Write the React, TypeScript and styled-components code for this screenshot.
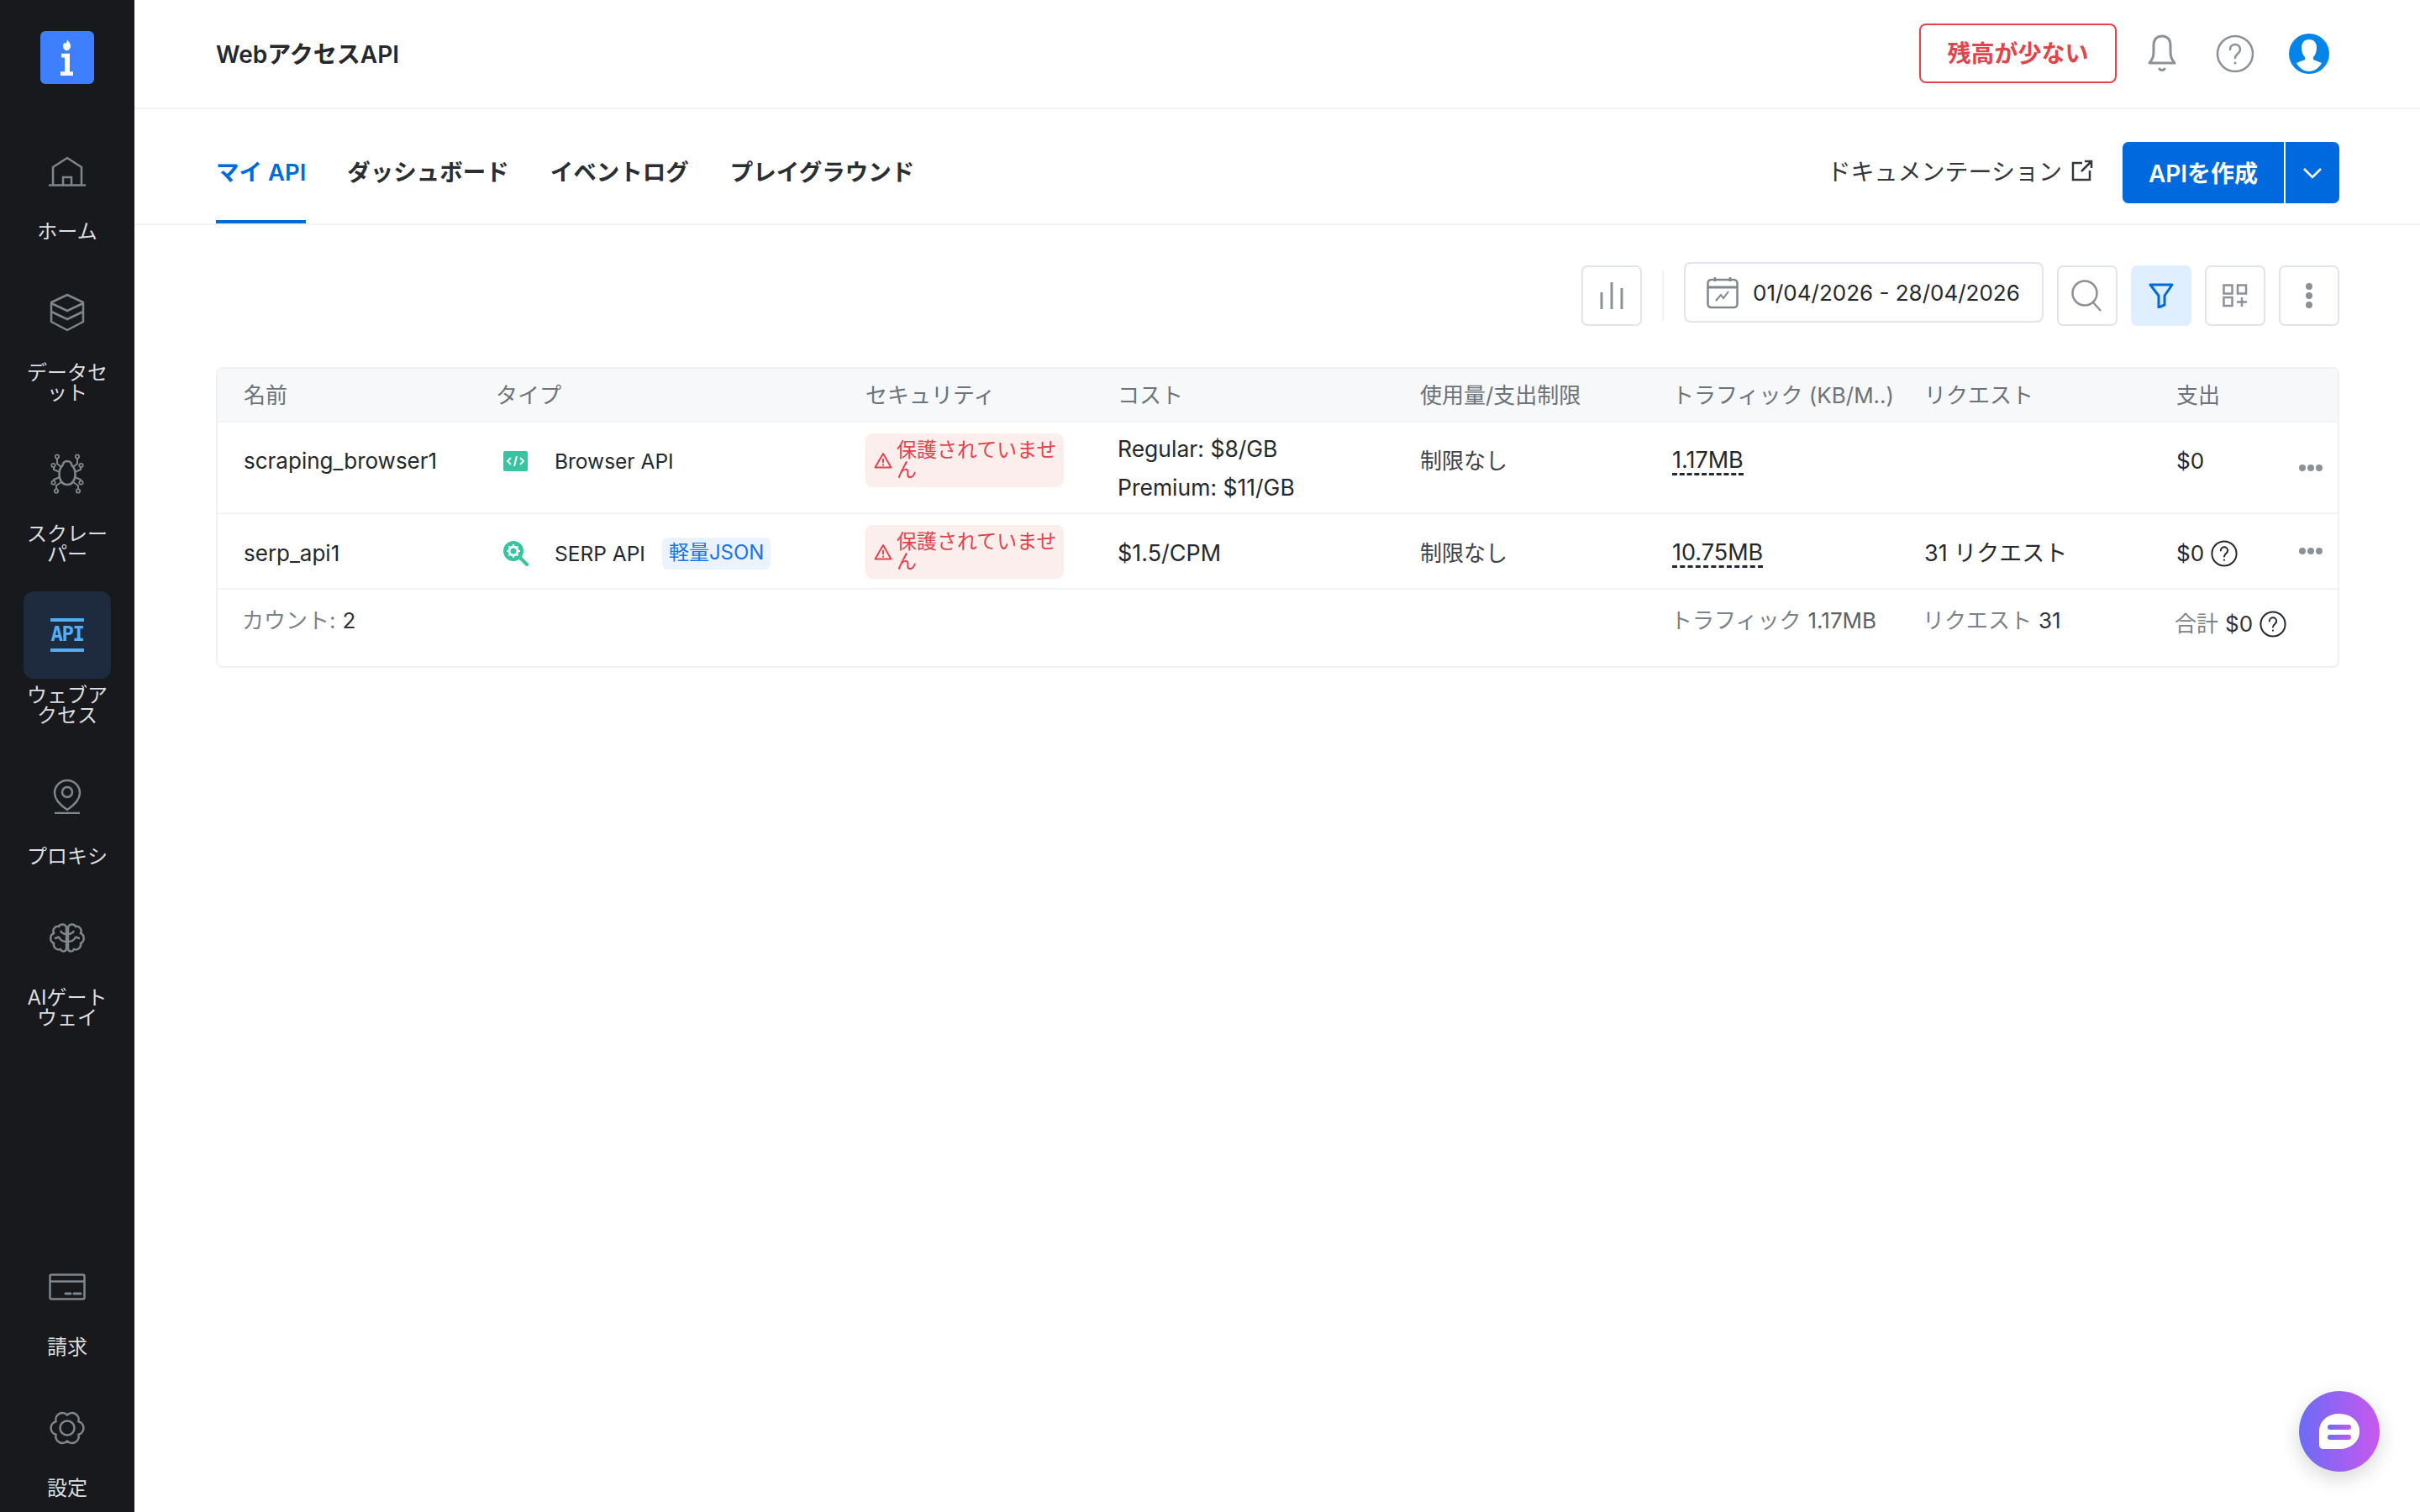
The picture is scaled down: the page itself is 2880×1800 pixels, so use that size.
import styled, { createGlobalStyle } from 'styled-components'
import type { ReactNode } from 'react'

const GlobalStyle = createGlobalStyle`
  html, body {
    margin: 0;
    padding: 0;
    background: #fff;
  }
  * {
    box-sizing: border-box;
  }
  body {
    font-family: Inter, "Noto Sans CJK JP", sans-serif;
    color: #25282c;
  }
`

const COLUMNS = '300px 440px 300px 360px 300px 300px 300px 140px 1fr'

const Shell = styled.div`
  display: flex;
  width: 2880px;
  height: 1800px;
  overflow: hidden;
  position: relative;
`

const Sidebar = styled.nav`
  width: 160px;
  flex-shrink: 0;
  background: #17191c;
  display: flex;
  flex-direction: column;
  align-items: center;
  padding: 37px 0 16px;
`

const Logo = styled.div`
  width: 64px;
  height: 63px;
  border-radius: 6px;
  background: #3d7fff;
  display: flex;
  align-items: center;
  justify-content: center;
  margin-bottom: 52px;
`

const NavGroup = styled.div`
  display: flex;
  flex-direction: column;
  align-items: center;
  gap: 32px;
`

const NavSpacer = styled.div`
  flex: 1;
`

const NavItem = styled.div`
  display: flex;
  flex-direction: column;
  align-items: center;
  gap: 8px;
`

const NavIcon = styled.div<{ $active?: boolean }>`
  width: 104px;
  height: 104px;
  border-radius: 12px;
  display: flex;
  align-items: center;
  justify-content: center;
  background: ${p => (p.$active ? '#1e2b3e' : 'transparent')};
`

const NavLabel = styled.div`
  width: 104px;
  text-align: center;
  font-size: 24px;
  line-height: 24px;
  color: #dcdee0;
  line-break: loose;
`

const ApiMark = styled.div`
  width: 40px;
  height: 40px;
  border-top: 4px solid #53aef5;
  border-bottom: 4px solid #53aef5;
  color: #53aef5;
  font-family: "DejaVu Sans Mono", monospace;
  font-size: 24px;
  font-weight: 700;
  line-height: 31px;
  letter-spacing: -1.5px;
  text-align: center;
  white-space: nowrap;
`

const Main = styled.main`
  flex: 1;
  min-width: 0;
  display: flex;
  flex-direction: column;
`

const TopBar = styled.header`
  height: 130px;
  flex-shrink: 0;
  border-bottom: 2px solid #f2f3f4;
  padding: 28px 96px 0 97px;
  display: flex;
  align-items: flex-start;
  justify-content: space-between;
`

const PageTitle = styled.h1`
  margin: 0;
  font-size: 28px;
  line-height: 74px;
  font-weight: 600;
  color: #25282c;
`

const TopActions = styled.div`
  display: flex;
  align-items: center;
  height: 71px;
`

const LowBalance = styled.button`
  width: 235px;
  height: 71px;
  padding: 0 0 3px;
  border: 2px solid #e1444b;
  border-radius: 8px;
  background: #fff;
  color: #e1444b;
  font: 600 28px Inter, "Noto Sans CJK JP", sans-serif;
  margin-right: 36px;
`

const TopIcon = styled.div<{ $gap?: number }>`
  display: flex;
  margin-right: ${p => p.$gap ?? 0}px;
`

const TabBar = styled.div`
  height: 138px;
  flex-shrink: 0;
  border-bottom: 2px solid #f2f3f4;
  padding: 0 96px 0 97px;
  display: flex;
  align-items: stretch;
  justify-content: space-between;
`

const Tabs = styled.div`
  display: flex;
  gap: 49px;
`

const Tab = styled.div<{ $active?: boolean }>`
  display: flex;
  align-items: center;
  height: 136px;
  font-size: 27.5px;
  font-weight: 600;
  padding-top: 14px;
  color: ${p => (p.$active ? '#0069de' : '#2b2e32')};
  border-bottom: 4px solid ${p => (p.$active ? '#0069de' : 'transparent')};
`

const TabActions = styled.div`
  display: flex;
  align-items: center;
  padding-top: 15px;
`

const DocsLink = styled.div`
  display: flex;
  align-items: center;
  gap: 11px;
  font-size: 28px;
  color: #33373b;
  margin-right: 35px;
  padding-bottom: 5px;
`

const CreateButton = styled.div`
  display: flex;
  height: 73px;
  border-radius: 7px;
  overflow: hidden;
  background: #0069de;
  color: #fff;
`

const CreateLabel = styled.div`
  width: 194px;
  display: flex;
  align-items: center;
  justify-content: center;
  padding-bottom: 2px;
  font-size: 28px;
  font-weight: 600;
  border-right: 2px solid #fff;
`

const CreateCaret = styled.div`
  width: 64px;
  display: flex;
  align-items: center;
  justify-content: center;
`

const Content = styled.section`
  padding: 44px 96px 0 97px;
  display: flex;
  flex-direction: column;
`

const Toolbar = styled.div`
  display: flex;
  justify-content: flex-end;
  align-items: flex-start;
  gap: 16px;
  height: 125px;
`

const ToolButton = styled.div<{ $active?: boolean }>`
  width: 72px;
  height: 72px;
  margin-top: 4px;
  border-radius: 7px;
  display: flex;
  align-items: center;
  justify-content: center;
  border: 2px solid ${p => (p.$active ? '#e0efff' : '#e1e4e8')};
  background: ${p => (p.$active ? '#e0efff' : '#fff')};
`

const ToolDivider = styled.div`
  width: 2px;
  height: 60px;
  margin: 10px 8px 0;
  background: #f0f1f3;
`

const DatePicker = styled.div`
  width: 428px;
  height: 72px;
  border: 2px solid #e1e4e8;
  border-radius: 8px;
  display: flex;
  align-items: center;
  gap: 17px;
  padding-left: 25px;
  font-size: 26px;
  color: #25282c;
  white-space: nowrap;
`

const Table = styled.div`
  border: 2px solid #eff1f3;
  border-radius: 8px;
  overflow: hidden;
  height: 358px;
`

const HeadRow = styled.div`
  display: grid;
  grid-template-columns: ${COLUMNS};
  height: 64px;
  padding-bottom: 4px;
  align-items: center;
  background: #f7f8fa;
  border-bottom: 2px solid #f2f3f4;
`

const HeadCell = styled.div`
  padding-left: 31px;
  font-size: 26px;
  color: #6b737b;
  white-space: nowrap;
`

const Row = styled.div<{ $height: number }>`
  display: grid;
  grid-template-columns: ${COLUMNS};
  height: ${p => p.$height}px;
  border-bottom: 2px solid #f2f3f4;
`

const Cell = styled.div<{ $top?: number; $muted?: boolean; $size?: number }>`
  padding: ${p => p.$top ?? 0}px 0 0 31px;
  font-size: ${p => p.$size ?? 26}px;
  line-height: 46px;
  color: ${p => (p.$muted ? '#3f444a' : '#25282c')};
  white-space: nowrap;
`

const TypeCell = styled(Cell)`
  display: flex;
  align-items: flex-start;
  font-size: 24.5px;
`

const TypeIcon = styled.div`
  width: 40px;
  height: 46px;
  margin: 0 21px 0 9px;
  display: flex;
  align-items: center;
`

const Tag = styled.span`
  margin: 4px 0 0 20px;
  height: 38px;
  padding: 0 8px;
  border-radius: 7px;
  background: #eaf3ff;
  color: #1a73e8;
  font-size: 24px;
  line-height: 36px;
`

const BadgeCell = styled.div<{ $top: number }>`
  padding: ${p => p.$top}px 0 0 31px;
`

const Badge = styled.div`
  width: 236px;
  height: 64px;
  border-radius: 8px;
  background: #fdeeee;
  color: #e1444b;
  display: flex;
  align-items: center;
  gap: 5px;
  padding-left: 10px;
  font-size: 24px;
  line-height: 24px;
`

const BadgeText = styled.div`
  width: 194px;
`

const Dashed = styled.span`
  display: inline-block;
  line-height: 31px;
  border-bottom: 3px dashed #25282c;
`

const Spend = styled.span`
  display: inline-flex;
  align-items: center;
  gap: 8px;
`

const Dots = styled.div`
  align-self: center;
  display: flex;
  gap: 2px;
  padding-left: 37px;
`

const Dot = styled.i<{ $size?: number; $color?: string }>`
  display: block;
  width: ${p => p.$size ?? 8}px;
  height: ${p => p.$size ?? 8}px;
  border-radius: 50%;
  background: ${p => p.$color ?? '#8a9198'};
`

const MoreDots = styled.div`
  display: flex;
  flex-direction: column;
  gap: 3px;
`

const FootRow = styled.div`
  display: grid;
  grid-template-columns: ${COLUMNS};
  padding-top: 14px;
`

const FootCell = styled.div<{ $shift?: number; $span?: number }>`
  grid-column: span ${p => p.$span ?? 1};
  margin-top: ${p => p.$shift ?? 0}px;
  padding-left: 29px;
  font-size: 26px;
  line-height: 46px;
  color: #7b828a;
  white-space: nowrap;
  display: flex;
  align-items: center;
  gap: 8px;
  height: 46px;
`

const FootValue = styled.span<{ $muted?: boolean }>`
  color: ${p => (p.$muted ? '#5b6268' : '#30343a')};
`

const ChatBubble = styled.div`
  position: absolute;
  right: 48px;
  bottom: 48px;
  width: 96px;
  height: 96px;
  border-radius: 50%;
  background: linear-gradient(90deg, #6a6cf6, #c958ee);
  box-shadow: 0 8px 24px rgba(0, 0, 0, 0.16);
  display: flex;
  align-items: center;
  justify-content: center;
`

const Line = ({ children, w, h }: { children: ReactNode; w: number; h: number }) => (
  <svg width={w} height={h} viewBox={`0 0 ${w} ${h}`} fill="none" stroke="#7f868c" strokeWidth="2.5">
    {children}
  </svg>
)

const HomeIcon = () => (
  <Line w={44} h={36}>
    <path d="M5 34V13L22 2l17 11v21" strokeLinejoin="round" />
    <path d="M0 34.5h44M17 34v-9h10v9" />
  </Line>
)

const LayersIcon = () => (
  <Line w={44} h={46}>
    <path d="M22 2l19 9v23L22 44 3 34V11z" strokeLinejoin="round" />
    <path d="M3 12l19 9 19-9M3 22l19 9 19-9" />
  </Line>
)

const SpiderLegs = () => (
  <>
    <path d="M13 16L8 12V5M11 22l-7-3v-3M11 28l-7 3v2M13 34l-6 4v4" strokeWidth="2" />
    <circle cx="8" cy="3.500" r="2.200" strokeWidth="1.800" />
    <circle cx="3.500" cy="14" r="2.200" strokeWidth="1.800" />
    <circle cx="3.500" cy="34.500" r="2.200" strokeWidth="1.800" />
    <circle cx="7" cy="44.500" r="2.200" strokeWidth="1.800" />
  </>
)

const SpiderIcon = () => (
  <Line w={40} h={48}>
    <path d="M20 9c3 0 5 2 5.500 5 2.500 2 4 6 4 11 0 7-4 12-9.500 12s-9.500-5-9.500-12c0-5 1.500-9 4-11C15 11 17 9 20 9z" />
    <SpiderLegs />
    <g transform="translate(40 0) scale(-1 1)">
      <SpiderLegs />
    </g>
  </Line>
)

const PinIcon = () => (
  <Line w={34} h={42}>
    <path d="M17 37C8 31 2 25 2 17a15 15 0 1 1 30 0c0 8-6 14-15 20z" />
    <circle cx="17" cy="16" r="6" />
    <path d="M2 41h30" />
  </Line>
)

const BrainHalf = () => (
  <path d="M21 6c-1-4-7-5-9-1-5-1-8 4-6 8-5 2-5 10 0 12-1 5 4 9 8 7 2 4 7 3 7-1zM21 14c-4 0-6-2-7-4M21 23c-4 0-8-2-9-6M7 19c2 0 4-1 5-2" />
)

const BrainIcon = () => (
  <Line w={44} h={37}>
    <BrainHalf />
    <g transform="translate(44 0) scale(-1 1)">
      <BrainHalf />
    </g>
  </Line>
)

const CardIcon = () => (
  <Line w={44} h={32}>
    <rect x="1.500" y="1.500" width="41" height="29" rx="2" />
    <path d="M1.500 9.500h41" />
    <path d="M20 24h6M30 24h8" strokeWidth="3" strokeLinecap="round" />
  </Line>
)

const GearIcon = () => (
  <Line w={44} h={42}>
    <path d="M22 5.500A8 8 0 0 1 35.400 13.250 8 8 0 0 1 35.400 28.750 8 8 0 0 1 22 36.500 8 8 0 0 1 8.600 28.750 8 8 0 0 1 8.600 13.250 8 8 0 0 1 22 5.500z" strokeLinejoin="round" />
    <circle cx="22" cy="21" r="8.500" />
  </Line>
)

const LogoMark = () => (
  <svg width="16" height="43" viewBox="0 0 16 36" preserveAspectRatio="none" fill="#fff">
    <path d="M8 0c1 2 4 3 4 6.500a4.500 4.500 0 0 1-9 0C3 5 4 4 5 3c0 1 1 1.500 1.500 1C7 3 8 2 8 0z" />
    <path d="M1 14h10v18h4v4H0v-4h5V18H1z" />
  </svg>
)

const BellIcon = () => (
  <svg width="36" height="46" viewBox="0 0 36 46" fill="none" stroke="#8a9198" strokeWidth="3">
    <path d="M3 34c3-4 5-6 5-14V13C8 6 12 2 18 2s10 4 10 11v7c0 8 2 10 5 14z" strokeLinejoin="round" />
    <path d="M15 41c1 2 5 2 6 0" strokeLinecap="round" />
  </svg>
)

const HelpIcon = ({ size = 46, color = '#8a9198', width = 2.5 }: { size?: number; color?: string; width?: number }) => (
  <svg width={size} height={size} viewBox="0 0 46 46" fill="none" stroke={color} strokeWidth={(width * 46) / size} style={{ flexShrink: 0 }}>
    <circle cx="23" cy="23" r="21" />
    <path d="M17 18c0-4 3-6 6-6s6 2 6 6c0 5-6 5-6 10" strokeLinecap="round" />
    <circle cx="23" cy="34" r="1.500" fill={color} stroke="none" />
  </svg>
)

const AvatarIcon = () => (
  <svg width="48" height="48" viewBox="0 0 48 48">
    <circle cx="24" cy="24" r="24" fill="#0284e8" />
    <path d="M24 7c6 0 9 4 9 10 0 5-2 9-4 11v3l10 4c-3 6-9 10-15 10S12 41 9 35l10-4v-3c-2-2-4-6-4-11 0-6 3-10 9-10z" fill="#fff" />
  </svg>
)

const ExternalIcon = () => (
  <svg width="26" height="26" viewBox="0 0 26 26" fill="none" stroke="#33373b" strokeWidth="2.500">
    <path d="M13 4H2v20h20V13M12 14L24 2M16 2h8v8" />
  </svg>
)

const CaretIcon = () => (
  <svg width="24" height="14" viewBox="0 0 24 14" fill="none" stroke="#fff" strokeWidth="2.500">
    <path d="M2 2l10 10L22 2" />
  </svg>
)

const BarsIcon = () => (
  <svg width="28" height="32" viewBox="0 0 28 32" fill="none" stroke="#8a9198" strokeWidth="3">
    <path d="M2 12v20M14 0v32M26 7v25" />
  </svg>
)

const CalendarIcon = () => (
  <svg width="38" height="40" viewBox="0 0 38 40" fill="none" stroke="#7f868c" strokeWidth="2.500">
    <rect x="1.500" y="5" width="35" height="33" rx="4" />
    <path d="M1.500 14h35" strokeWidth="3" />
    <path d="M10 2v5M28 2v5" />
    <path d="M11 30l6-7 3 4 6-8" strokeWidth="2" />
  </svg>
)

const SearchIcon = () => (
  <svg width="38" height="38" viewBox="0 0 38 38" fill="none" stroke="#8a9198" strokeWidth="2.500">
    <circle cx="16" cy="16" r="14.500" />
    <path d="M26 27l9 10" />
  </svg>
)

const FilterIcon = () => (
  <svg width="30" height="30" viewBox="0 0 30 30" fill="none" stroke="#0069de" strokeWidth="3">
    <path d="M2 2h26L19 15v11l-7 3V15z" strokeLinejoin="round" />
  </svg>
)

const GridPlusIcon = () => (
  <svg width="30" height="28" viewBox="0 0 30 28" fill="none" stroke="#8a9198" strokeWidth="2.500">
    <rect x="1.500" y="1.500" width="10" height="10" />
    <rect x="18" y="1.500" width="10" height="10" />
    <rect x="1.500" y="16" width="10" height="10" />
    <path d="M23 16v11M17 21.500h12" />
  </svg>
)

const WarnIcon = () => (
  <svg width="22" height="20" viewBox="0 0 22 20" fill="none" stroke="#e1444b" strokeWidth="2" style={{ flexShrink: 0 }}>
    <path d="M11 2L1.500 18.500h19z" strokeLinejoin="round" />
    <path d="M11 8v5M11 14.500v2" />
  </svg>
)

const CodeIcon = () => (
  <svg width="29" height="24" viewBox="0 0 29 24">
    <rect width="29" height="24" rx="2" fill="#36c5a0" />
    <path d="M9 8l-4 4 4 4M20 8l4 4-4 4M16 6l-3 12" fill="none" stroke="#fff" strokeWidth="2" />
  </svg>
)

const SerpIcon = () => (
  <svg width="30" height="30" viewBox="0 0 30 30">
    <circle cx="12" cy="12" r="12" fill="#36c5a0" />
    <circle cx="12" cy="12" r="5" fill="none" stroke="#fff" strokeWidth="3" />
    <path d="M12 4v3M12 17v3M4 12h3M17 12h3M6.500 6.500l2 2M15.500 15.500l2 2M6.500 17.500l2-2M15.500 8.500l2-2" stroke="#fff" strokeWidth="2" />
    <path d="M20 20l8 8" stroke="#36c5a0" strokeWidth="4" strokeLinecap="round" />
  </svg>
)

const ChatIcon = () => (
  <svg width="48" height="42" viewBox="0 0 48 42">
    <defs>
      <linearGradient id="chatLine" x1="0" x2="1" y1="0" y2="0">
        <stop offset="0" stopColor="#6a6cf6" />
        <stop offset="1" stopColor="#c958ee" />
      </linearGradient>
    </defs>
    <path d="M24 0c13 0 24 8 24 21S37 42 24 42H5c-3 0-5-2-5-5V21C0 8 11 0 24 0z" fill="#fff" />
    <rect x="10" y="13" width="28" height="6" rx="3" fill="url(#chatLine)" />
    <rect x="10" y="25" width="28" height="6" rx="3" fill="url(#chatLine)" />
  </svg>
)

const RowDots = () => (
  <Dots>
    <Dot />
    <Dot />
    <Dot />
  </Dots>
)

const SecurityBadge = ({ top }: { top: number }) => (
  <BadgeCell $top={top}>
    <Badge>
      <WarnIcon />
      <BadgeText>保護されていません</BadgeText>
    </Badge>
  </BadgeCell>
)

export default function App() {
  return (
    <Shell>
      <GlobalStyle />
      <Sidebar>
        <Logo>
          <LogoMark />
        </Logo>
        <NavGroup>
          <NavItem>
            <NavIcon>
              <HomeIcon />
            </NavIcon>
            <NavLabel>ホーム</NavLabel>
          </NavItem>
          <NavItem>
            <NavIcon>
              <LayersIcon />
            </NavIcon>
            <NavLabel>データセット</NavLabel>
          </NavItem>
          <NavItem>
            <NavIcon>
              <SpiderIcon />
            </NavIcon>
            <NavLabel>スクレーパー</NavLabel>
          </NavItem>
          <NavItem>
            <NavIcon $active>
              <ApiMark>API</ApiMark>
            </NavIcon>
            <NavLabel>ウェブアクセス</NavLabel>
          </NavItem>
          <NavItem>
            <NavIcon>
              <PinIcon />
            </NavIcon>
            <NavLabel>プロキシ</NavLabel>
          </NavItem>
          <NavItem>
            <NavIcon>
              <BrainIcon />
            </NavIcon>
            <NavLabel>AIゲートウェイ</NavLabel>
          </NavItem>
        </NavGroup>
        <NavSpacer />
        <NavGroup>
          <NavItem>
            <NavIcon>
              <CardIcon />
            </NavIcon>
            <NavLabel>請求</NavLabel>
          </NavItem>
          <NavItem>
            <NavIcon>
              <GearIcon />
            </NavIcon>
            <NavLabel>設定</NavLabel>
          </NavItem>
        </NavGroup>
      </Sidebar>

      <Main>
        <TopBar>
          <PageTitle>WebアクセスAPI</PageTitle>
          <TopActions>
            <LowBalance>残高が少ない</LowBalance>
            <TopIcon $gap={46}>
              <BellIcon />
            </TopIcon>
            <TopIcon $gap={41}>
              <HelpIcon />
            </TopIcon>
            <TopIcon $gap={12}>
              <AvatarIcon />
            </TopIcon>
          </TopActions>
        </TopBar>

        <TabBar>
          <Tabs>
            <Tab $active>マイ API</Tab>
            <Tab>ダッシュボード</Tab>
            <Tab>イベントログ</Tab>
            <Tab>プレイグラウンド</Tab>
          </Tabs>
          <TabActions>
            <DocsLink>
              ドキュメンテーション
              <ExternalIcon />
            </DocsLink>
            <CreateButton>
              <CreateLabel>APIを作成</CreateLabel>
              <CreateCaret>
                <CaretIcon />
              </CreateCaret>
            </CreateButton>
          </TabActions>
        </TabBar>

        <Content>
          <Toolbar>
            <ToolButton>
              <BarsIcon />
            </ToolButton>
            <ToolDivider />
            <DatePicker>
              <CalendarIcon />
              01/04/2026 - 28/04/2026
            </DatePicker>
            <ToolButton>
              <SearchIcon />
            </ToolButton>
            <ToolButton $active>
              <FilterIcon />
            </ToolButton>
            <ToolButton>
              <GridPlusIcon />
            </ToolButton>
            <ToolButton>
              <MoreDots>
                <Dot />
                <Dot />
                <Dot />
              </MoreDots>
            </ToolButton>
          </Toolbar>

          <Table>
            <HeadRow>
              <HeadCell>名前</HeadCell>
              <HeadCell>タイプ</HeadCell>
              <HeadCell>セキュリティ</HeadCell>
              <HeadCell>コスト</HeadCell>
              <HeadCell>使用量/支出制限</HeadCell>
              <HeadCell>トラフィック (KB/M..)</HeadCell>
              <HeadCell>リクエスト</HeadCell>
              <HeadCell>支出</HeadCell>
            </HeadRow>

            <Row $height={109}>
              <Cell $top={23}>scraping_browser1</Cell>
              <TypeCell $top={23}>
                <TypeIcon>
                  <CodeIcon />
                </TypeIcon>
                Browser API
              </TypeCell>
              <SecurityBadge top={13} />
              <Cell $top={8} $size={26.5}>
                Regular: $8/GB
                <br />
                Premium: $11/GB
              </Cell>
              <Cell $top={23} $muted>
                制限なし
              </Cell>
              <Cell $top={22} $size={27}>
                <Dashed>1.17MB</Dashed>
              </Cell>
              <Cell />
              <Cell $top={23}>$0</Cell>
              <RowDots />
            </Row>

            <Row $height={90}>
              <Cell $top={24}>serp_api1</Cell>
              <TypeCell $top={24}>
                <TypeIcon>
                  <SerpIcon />
                </TypeIcon>
                SERP API
                <Tag>軽量JSON</Tag>
              </TypeCell>
              <SecurityBadge top={13} />
              <Cell $top={24} $size={27}>
                $1.5/CPM
              </Cell>
              <Cell $top={24} $muted>
                制限なし
              </Cell>
              <Cell $top={23} $size={27}>
                <Dashed>10.75MB</Dashed>
              </Cell>
              <Cell $top={24} $size={27}>
                31 リクエスト
              </Cell>
              <Cell $top={24}>
                <Spend>
                  $0
                  <HelpIcon size={32} color="#25282c" width={2} />
                </Spend>
              </Cell>
              <RowDots />
            </Row>

            <FootRow>
              <FootCell>
                カウント: <FootValue>2</FootValue>
              </FootCell>
              <div />
              <div />
              <div />
              <div />
              <FootCell>
                トラフィック <FootValue $muted>1.17MB</FootValue>
              </FootCell>
              <FootCell>
                リクエスト <FootValue>31</FootValue>
              </FootCell>
              <FootCell $shift={4} $span={2}>
                合計 <FootValue>$0</FootValue>
                <HelpIcon size={32} color="#25282c" width={2} />
              </FootCell>
            </FootRow>
          </Table>
        </Content>
      </Main>

      <ChatBubble>
        <ChatIcon />
      </ChatBubble>
    </Shell>
  )
}
